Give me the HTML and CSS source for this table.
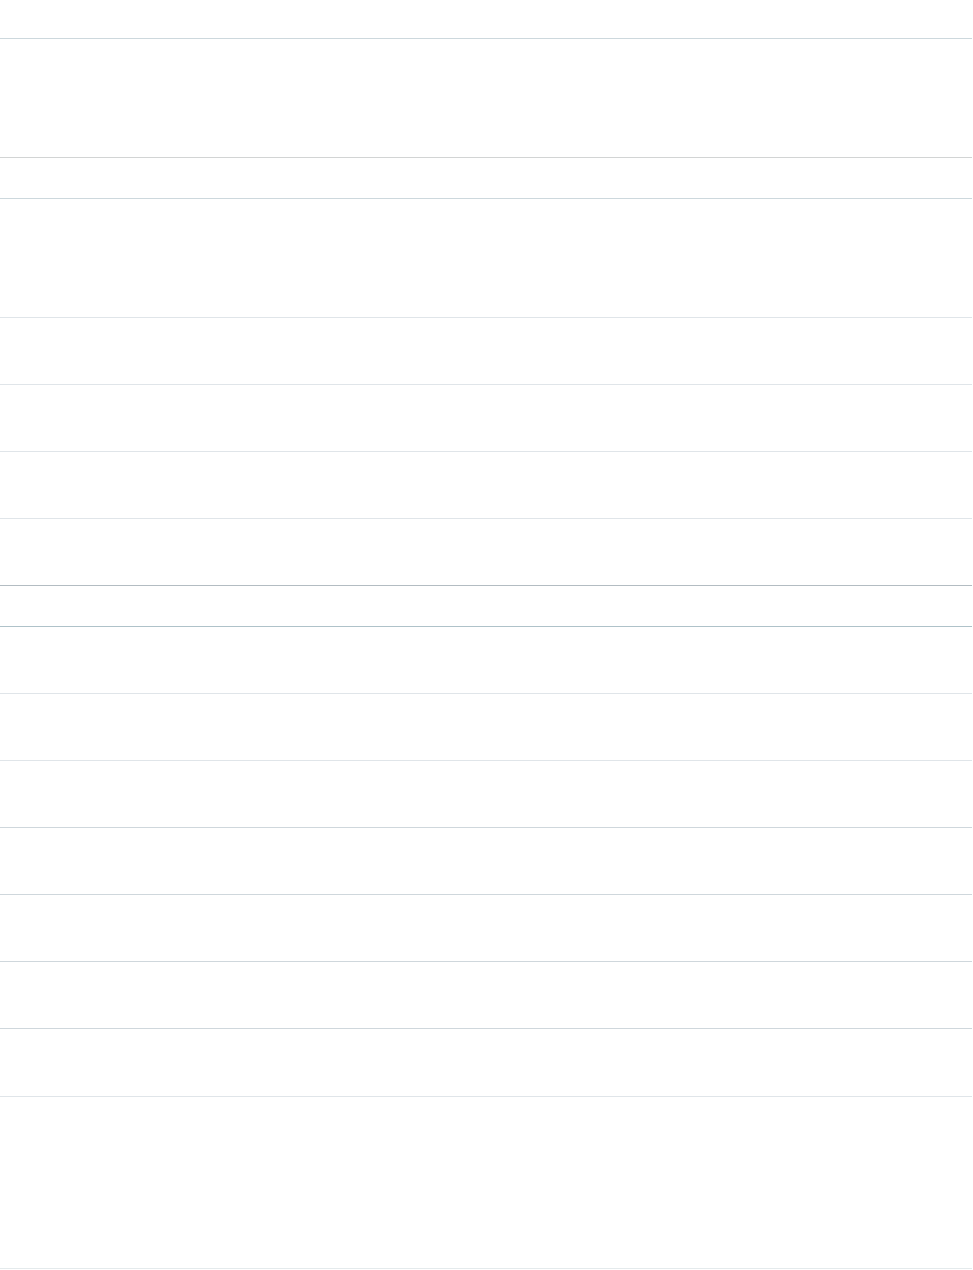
FILE: index.html
```html
<!DOCTYPE html>
<html lang="en">
<head>
    <meta charset="UTF-8">
    <meta name="viewport" content="width=device-width, initial-scale=1.0">
    <title>Listing</title>
    <link rel="stylesheet" href="styles.css">
</head>
<body>
    <div class="sheet">
        <div class="row head blue"></div>
        <div class="row tall grey"></div>
        <div class="row sub blue"></div>
        <div class="row tall faint"></div>
        <div class="row item faint"></div>
        <div class="row item faint"></div>
        <div class="row item faint"></div>
        <div class="row item dark"></div>
        <div class="row sub darkblue"></div>
        <div class="row item faint"></div>
        <div class="row item faint"></div>
        <div class="row item mid"></div>
        <div class="row item mid"></div>
        <div class="row item mid"></div>
        <div class="row item mid"></div>
        <div class="row item last faint"></div>
        <div class="row foot pale"></div>
    </div>
</body>
</html>
```

FILE: styles.css
```css
* {
    font-family: "Liberation Sans", Arial, sans-serif;
    box-sizing: content-box;
}
body {
    margin: 0;
    background-color: #fff;
}
.sheet {
    width: 972px;
}
.row {
    border-bottom: 1px solid #e0e5e9;
}
.head {
    height: 38px;
}
.tall {
    height: 118px;
}
.sub {
    height: 40px;
}
.item {
    height: 66px;
}
.item.last {
    height: 67px;
}
.foot {
    height: 171px;
}

.blue {
    border-bottom-color: #cdd8dd;
}
.grey {
    border-bottom-color: #d2d4d4;
}
.faint {
    border-bottom-color: #e0e5e9;
}
.mid {
    border-bottom-color: #cfd7dc;
}
.dark {
    border-bottom-color: #b3bcc2;
}
.darkblue {
    border-bottom-color: #afc2c9;
}
.pale {
    border-bottom-color: #e4eaec;
}
```
